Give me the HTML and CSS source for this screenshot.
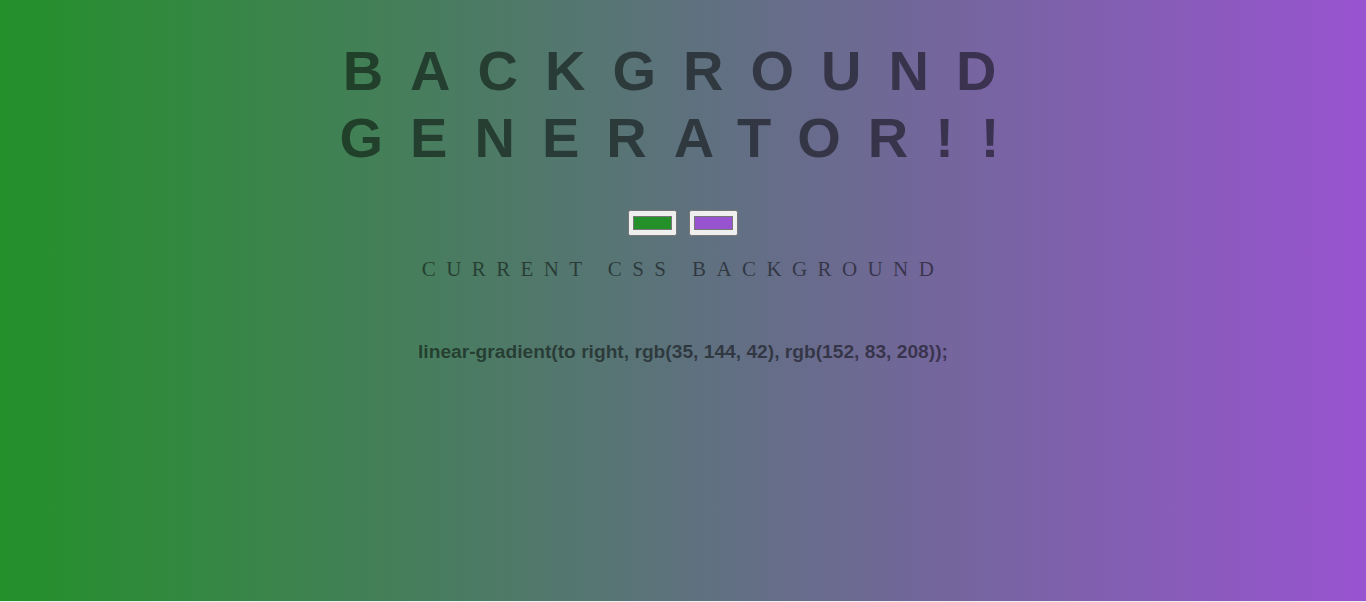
FILE: index.html
```html
<!DOCTYPE html>
<html lang="en">
<head>
<meta charset="utf-8">
<title>Background Generator</title>
<link rel="stylesheet" href="styles.css">
</head>
<body class="page">
  <h1 class="title">Background Generator!!</h1>
  <div class="pickers">
    <input class="picker" type="color" name="color1" value="#23902a">
    <input class="picker" type="color" name="color2" value="#9853d0">
  </div>
  <h2 class="subtitle">Current CSS Background</h2>
  <h3 class="code">linear-gradient(to right, rgb(35, 144, 42), rgb(152, 83, 208));</h3>
</body>
</html>
```

FILE: styles.css
```css
html {
  background: #eeeeee;
}
.page {
  margin: 0;
  height: 601px;
  box-sizing: border-box;
  padding-top: 37px;
  background: linear-gradient(to right, rgb(35, 144, 42), rgb(152, 83, 208));
  color: rgba(0, 0, 0, 0.5);
  text-align: center;
  font-family: "Liberation Serif", serif;
}
.title {
  margin: 0;
  font: 700 56px/67px "Liberation Sans", Arial, sans-serif;
  letter-spacing: 27px;
  text-transform: uppercase;
  color: rgba(0, 0, 0, 0.5);
}
.pickers {
  display: flex;
  justify-content: center;
  gap: 12px;
  margin-top: 39px;
}
.picker {
  width: 49px;
  height: 26px;
  margin: 0;
  box-sizing: border-box;
}
.subtitle {
  margin: 21px 0 0;
  font: 400 21px "Liberation Serif", serif;
  letter-spacing: 10.4px;
  text-transform: uppercase;
}
.code {
  margin: 59px 0 0;
  font: 700 19.2px "Liberation Sans", Arial, sans-serif;
  color: rgba(0, 0, 0, 0.5);
}
```
